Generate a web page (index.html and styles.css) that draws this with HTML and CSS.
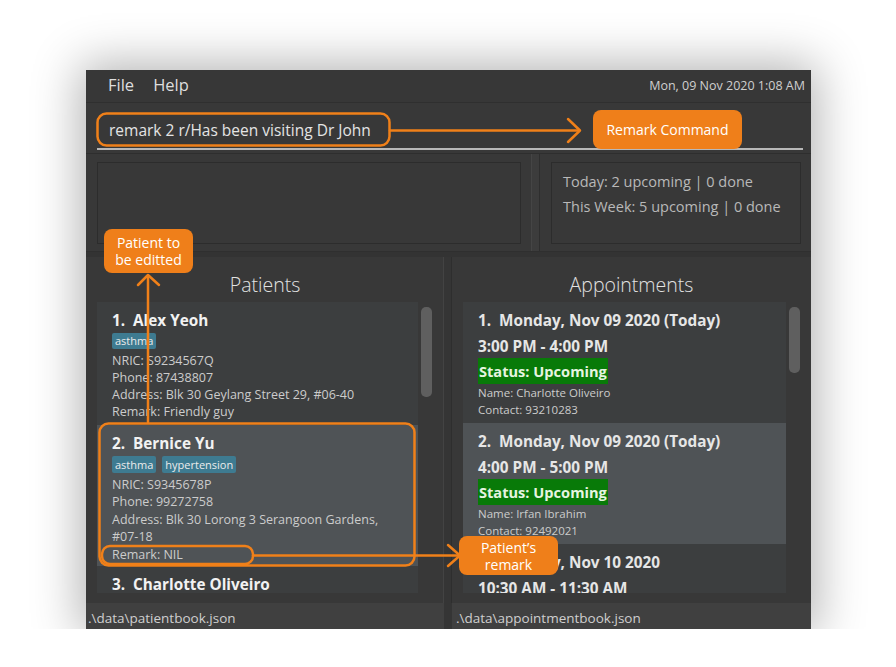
FILE: index.html
```html
<!DOCTYPE html>
<html>
<head>
<meta charset="utf-8">
<link rel="stylesheet" href="styles.css">
</head>
<body>
<div class="window">
  <div class="menubar">
    <div class="menu-items"><span class="menu-item">File</span><span class="menu-item">Help</span></div>
    <div class="clock">Mon, 09 Nov 2020 1:08 AM</div>
  </div>
  <div class="command-area">
    <div class="command-field">remark 2 r/Has been visiting Dr John</div>
  </div>
  <div class="top-split">
    <div class="pane pane-left"><div class="result-box"></div></div>
    <div class="divider"></div>
    <div class="pane pane-right">
      <div class="summary-box">
        <div class="summary-line">Today: 2 upcoming | 0 done</div>
        <div class="summary-line">This Week: 5 upcoming | 0 done</div>
      </div>
    </div>
  </div>
  <div class="lists">
    <div class="list-pane list-pane-left">
      <div class="list-title">Patients</div>
      <div class="list-box">
        <div class="cards">
          <div class="card">
            <div class="card-title">1.&nbsp; Alex Yeoh</div>
            <div class="tags"><span class="tag">asthma</span></div>
            <div class="line">NRIC: S9234567Q</div>
            <div class="line">Phone: 87438807</div>
            <div class="line">Address: Blk 30 Geylang Street 29, #06-40</div>
            <div class="line">Remark: Friendly guy</div>
          </div>
          <div class="card card-alt card-tall">
            <div class="card-title">2.&nbsp; Bernice Yu</div>
            <div class="tags"><span class="tag">asthma</span><span class="tag">hypertension</span></div>
            <div class="line">NRIC: S9345678P</div>
            <div class="line">Phone: 99272758</div>
            <div class="line">Address: Blk 30 Lorong 3 Serangoon Gardens,</div>
            <div class="line">#07-18</div>
            <div class="line">Remark: NIL</div>
          </div>
          <div class="card">
            <div class="card-title">3.&nbsp; Charlotte Oliveiro</div>
          </div>
        </div>
        <div class="scrolltrack"><div class="thumb thumb-left"></div></div>
      </div>
    </div>
    <div class="list-divider"></div>
    <div class="list-pane list-pane-right">
      <div class="list-title">Appointments</div>
      <div class="list-box list-box-right">
        <div class="cards">
          <div class="card appt">
            <div class="appt-title">1.&nbsp; Monday, Nov 09 2020 (Today)</div>
            <div class="appt-time">3:00 PM - 4:00 PM</div>
            <div class="status-row"><span class="status">Status: Upcoming</span></div>
            <div class="appt-line">Name: Charlotte Oliveiro</div>
            <div class="appt-line">Contact: 93210283</div>
          </div>
          <div class="card appt card-alt">
            <div class="appt-title">2.&nbsp; Monday, Nov 09 2020 (Today)</div>
            <div class="appt-time">4:00 PM - 5:00 PM</div>
            <div class="status-row"><span class="status">Status: Upcoming</span></div>
            <div class="appt-line">Name: Irfan Ibrahim</div>
            <div class="appt-line">Contact: 92492021</div>
          </div>
          <div class="card appt">
            <div class="appt-title">3.&nbsp; Monday, Nov 10 2020</div>
            <div class="appt-time">10:30 AM - 11:30 AM</div>
          </div>
        </div>
        <div class="scrolltrack"><div class="thumb thumb-right"></div></div>
      </div>
    </div>
  </div>
  <div class="statusbars">
    <div class="statusbar statusbar-left">.\data\patientbook.json</div>
    <div class="statusbar-gap"></div>
    <div class="statusbar statusbar-right">.\data\appointmentbook.json</div>
  </div>

  <svg class="annot-svg" width="725" height="559" viewBox="0 0 725 559">
    <g fill="none" stroke="#f08019" stroke-width="2.5" stroke-linecap="round" stroke-linejoin="round">
      <rect x="11.5" y="43.5" width="292" height="32" rx="9"/>
      <path d="M304 60.5 H493"/>
      <path d="M482 49 L494 60.5 L482 72"/>
      <path d="M62 206 V352"/>
      <path d="M52 215 L62 205 L73 215"/>
      <rect x="13.5" y="353.5" width="315" height="142" rx="9"/>
      <rect x="16" y="476" width="151" height="18" rx="8"/>
      <path d="M167 485.5 H373"/>
      <path d="M362 475 L374 485.5 L362 496"/>
    </g>
  </svg>
  <div class="label label-command">Remark Command</div>
  <div class="label label-patient">Patient to<br>be editted</div>
  <div class="label label-remark">Patient’s<br>remark</div>
</div>
</body>
</html>
```

FILE: styles.css
```css
html, body {
  margin: 0;
  padding: 0;
  background: #ffffff;
}

body {
  padding: 70px 0 0 86px;
  font-family: "Open Sans", "Noto Sans", sans-serif;
}

.window {
  position: relative;
  width: 725px;
  height: 559px;
  background: #383838;
  box-shadow: 0 0 45px 6px rgba(0, 0, 0, 0.3);
  display: flex;
  flex-direction: column;
  overflow: hidden;
  color: #dcdcdc;
}

/* menu bar */
.menubar {
  height: 32px;
  flex: none;
  display: flex;
  align-items: center;
  justify-content: space-between;
  background: #373737;
  border-bottom: 1px solid #2f2f2f;
  box-sizing: content-box;
  padding-bottom: 0;
}

.menu-items {
  display: flex;
  gap: 19px;
  padding-left: 22px;
  margin-top: -3px;
}

.menu-item {
  font-size: 16.5px;
  color: #dedede;
}

.clock {
  font-size: 12.5px;
  color: #cfcfcf;
  padding-right: 6px;
  margin-top: -2px;
}

/* command */
.command-area {
  height: 51px;
  flex: none;
  padding: 0 8px 0 11px;
  border-bottom: 1px solid #2e2e2e;
  box-sizing: border-box;
}

.command-field {
  margin-top: 13px;
  height: 32px;
  line-height: 28px;
  padding-left: 12px;
  font-size: 15.5px;
  color: #e4e4e4;
  border-bottom: 2px solid #b8b8b8;
}

/* result / summary */
.top-split {
  height: 97px;
  flex: none;
  display: flex;
  border-bottom: 1px solid #2f2f2f;
}

.pane {
  box-sizing: border-box;
  padding: 8px 10px 7px 11px;
  display: flex;
}

.pane-left {
  width: 445px;
}

.pane-right {
  flex: 1;
  padding-left: 11px;
  border-left: 1px solid #2e2e2e;
}

.divider {
  width: 7px;
  background: #3c3c3c;
  border-left: 1px solid #454545;
}

.result-box,
.summary-box {
  flex: 1;
  border: 1px solid #2c2c2c;
  box-sizing: border-box;
}

.summary-box {
  padding: 6px 11px;
}

.summary-line {
  font-size: 14.5px;
  line-height: 25px;
  color: #b9b9b9;
}

/* lists */
.lists {
  flex: 1;
  display: flex;
  border-top: 5px solid #333333;
}

.list-pane {
  display: flex;
  flex-direction: column;
  box-sizing: border-box;
}

.list-pane-left {
  width: 357px;
  padding: 0 10px 0 11px;
}

.list-pane-right {
  flex: 1;
  padding: 0 11px 0 11px;
}

.list-divider {
  width: 9px;
  background: #353535;
  border-left: 1px solid #434343;
  border-right: 1px solid #2e2e2e;
  box-sizing: border-box;
}

.list-title {
  margin-top: 13px;
  height: 32px;
  line-height: 30px;
  text-align: center;
  font-size: 19.5px;
  font-weight: 300;
  color: #e2e2e2;
}

.list-box {
  display: flex;
  overflow: hidden;
  height: 291px;
}

.cards {
  flex: 1;
  overflow: hidden;
  display: flex;
  flex-direction: column;
}

.card {
  flex: none;
  background: #3c3e3f;
  padding: 8px 15px 5px 15px;
}

.card-alt {
  background: #4f5356;
}

.card-tall {
  padding-bottom: 3px;
}

.card-tall .line {
  line-height: 17.4px;
}

.card-title {
  font-size: 15.3px;
  font-weight: 700;
  line-height: 20px;
  color: #f2f2f2;
}

.tags {
  display: flex;
  gap: 6px;
  margin-top: 3px;
  margin-bottom: 3px;
}

.tag {
  background: #3e7b91;
  color: #ececec;
  font-size: 11px;
  line-height: 16px;
  padding: 0 3px;
  border-radius: 2px;
}

.card-tall .tag {
  line-height: 17px;
}

.line {
  font-size: 12.5px;
  line-height: 17px;
  color: #cccccc;
}

.appt-title,
.appt-time {
  font-size: 15.3px;
  font-weight: 700;
  line-height: 20px;
  color: #e6e6e6;
}

.appt-time {
  margin-top: 6px;
}

.status-row {
  margin-top: 2px;
  display: flex;
}

.status {
  background: #087a08;
  color: #e6f5e0;
  font-size: 14.6px;
  font-weight: 700;
  line-height: 26px;
  padding: 0 1px;
}

.appt-line {
  font-size: 11.5px;
  line-height: 17px;
  color: #cccccc;
}

.scrolltrack {
  width: 15px;
  flex: none;
  position: relative;
}

.list-box-right .scrolltrack {
  width: 14px;
}

.thumb {
  position: absolute;
  left: 3px;
  width: 11px;
  background: #5f5f5f;
  border-radius: 5px;
}

.thumb-left {
  top: 5px;
  height: 90px;
}

.thumb-right {
  top: 5px;
  height: 66px;
}

/* status bars */
.statusbars {
  height: 26px;
  flex: none;
  display: flex;
}

.statusbar {
  font-size: 13.5px;
  line-height: 26px;
  padding-top: 2px;
  color: #cfcfcf;
  background: #404040;
  box-sizing: border-box;
}

.statusbar-left {
  width: 358px;
  padding-left: 2px;
}

.statusbar-gap {
  width: 8px;
  background: #353535;
}

.statusbar-right {
  flex: 1;
  padding-left: 4px;
}

/* annotations */
.annot-svg {
  position: absolute;
  left: 0;
  top: 0;
  pointer-events: none;
}

.label {
  position: absolute;
  background: #ef7f1a;
  color: #ffffff;
  border-radius: 8px;
  font-size: 14px;
  line-height: 17px;
  text-align: center;
  display: flex;
  align-items: center;
  justify-content: center;
}

.label-command {
  left: 507px;
  top: 40px;
  width: 149px;
  height: 39px;
}

.label-patient {
  left: 18px;
  top: 159px;
  width: 89px;
  height: 44px;
}

.label-remark {
  left: 373px;
  top: 466px;
  width: 99px;
  height: 39px;
}
```
